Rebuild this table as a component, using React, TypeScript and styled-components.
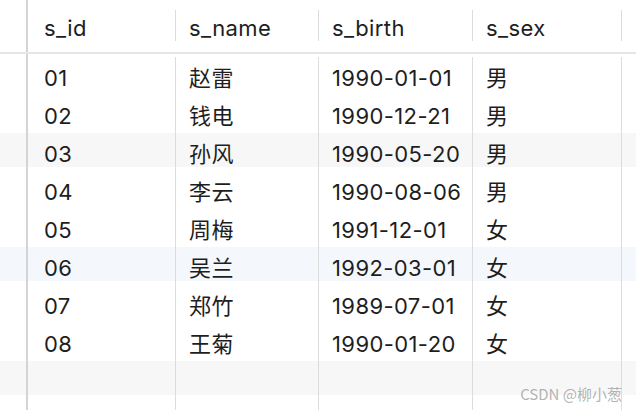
import React from "react";
import styled, { createGlobalStyle } from "styled-components";

const GlobalStyle = createGlobalStyle`
  html, body { margin: 0; padding: 0; background: #ffffff; }
  body {
    width: 636px;
    height: 410px;
    overflow: hidden;
    font-family: "Inter", "Noto Sans CJK SC", sans-serif;
    color: #1e1e1e;
  }
`;

const COLS = "28px 148px 143px 154px 149px 1fr";

const Page = styled.div`
  position: relative;
  width: 636px;
  height: 410px;
  display: flex;
  flex-direction: column;
  background: #ffffff;
`;

const HeaderRow = styled.div`
  display: grid;
  grid-template-columns: ${COLS};
  height: 52px;
  border-bottom: 2px solid #e6e6e6;
`;

const HeaderCell = styled.div<{ $pad?: number; $gutter?: boolean; $sep?: boolean }>`
  position: relative;
  box-sizing: border-box;
  padding-left: ${(p) => p.$pad ?? 13}px;
  padding-top: 4px;
  font-size: 22px;
  letter-spacing: 0.4px;
  line-height: 48px;
  white-space: nowrap;
  ${(p) => (p.$gutter ? "border-right: 2px solid #d4d4d4;" : "")}
  ${(p) =>
    p.$sep
      ? `&::after {
          content: "";
          position: absolute;
          right: 0;
          top: 10px;
          height: 31px;
          width: 1px;
          background: #dcdcdc;
        }`
      : ""}
`;

const Gap = styled.div`
  display: grid;
  grid-template-columns: ${COLS};
  height: 3px;
`;

const GapGutter = styled.div`
  border-right: 2px solid #d4d4d4;
`;

const Body = styled.div`
  display: flex;
  flex-direction: column;
  flex: 1;
`;

const Row = styled.div<{ $bg: string }>`
  display: grid;
  grid-template-columns: ${COLS};
  height: 38px;
  flex: 0 0 38px;
  background: linear-gradient(to bottom, ${(p) => p.$bg} 0 34px, #ffffff 34px);
`;

const Filler = styled.div`
  display: grid;
  grid-template-columns: ${COLS};
  flex: 1;
`;

const Cell = styled.div<{ $pad?: number; $gutter?: boolean; $last?: boolean }>`
  box-sizing: border-box;
  padding-left: ${(p) => p.$pad ?? 13}px;
  padding-top: 5px;
  font-size: 22px;
  letter-spacing: 0.4px;
  line-height: 33px;
  white-space: nowrap;
  border-right: ${(p) =>
    p.$gutter ? "2px solid #d4d4d4" : p.$last ? "none" : "1px solid #dcdcdc"};
`;

const Watermark = styled.div`
  position: absolute;
  right: 14px;
  bottom: 7px;
  font-family: "Noto Sans CJK SC", "Liberation Sans", sans-serif;
  font-size: 15px;
  line-height: 18px;
  color: rgba(160, 160, 160, 0.8);
  white-space: nowrap;
`;

type Student = { id: string; name: string; birth: string; sex: string };

const students: Student[] = [
  { id: "01", name: "赵雷", birth: "1990-01-01", sex: "男" },
  { id: "02", name: "钱电", birth: "1990-12-21", sex: "男" },
  { id: "03", name: "孙风", birth: "1990-05-20", sex: "男" },
  { id: "04", name: "李云", birth: "1990-08-06", sex: "男" },
  { id: "05", name: "周梅", birth: "1991-12-01", sex: "女" },
  { id: "06", name: "吴兰", birth: "1992-03-01", sex: "女" },
  { id: "07", name: "郑竹", birth: "1989-07-01", sex: "女" },
  { id: "08", name: "王菊", birth: "1990-01-20", sex: "女" },
];

const rowBg = (i: number) => {
  if (i === 5) return "#f4f8fc";
  if (i % 3 === 2) return "#f7f7f7";
  return "#ffffff";
};

const columns = ["s_id", "s_name", "s_birth", "s_sex"];

export default function App() {
  const rows: (Student | null)[] = [...students, null];
  return (
    <>
      <GlobalStyle />
      <Page>
        <HeaderRow>
          <HeaderCell $gutter />
          {columns.map((c, i) => (
            <HeaderCell key={c} $pad={i === 0 ? 16 : 13} $sep>
              {c}
            </HeaderCell>
          ))}
          <HeaderCell />
        </HeaderRow>
        <Gap>
          <GapGutter />
        </Gap>
        <Body>
          {rows.map((s, i) => (
            <Row key={i} $bg={rowBg(i)}>
              <Cell $gutter />
              <Cell $pad={16}>{s?.id}</Cell>
              <Cell>{s?.name}</Cell>
              <Cell>{s?.birth}</Cell>
              <Cell>{s?.sex}</Cell>
              <Cell $last />
            </Row>
          ))}
          <Filler>
            <Cell $gutter />
            <Cell />
            <Cell />
            <Cell />
            <Cell />
            <Cell $last />
          </Filler>
        </Body>
        <Watermark>CSDN @柳小葱</Watermark>
      </Page>
    </>
  );
}
